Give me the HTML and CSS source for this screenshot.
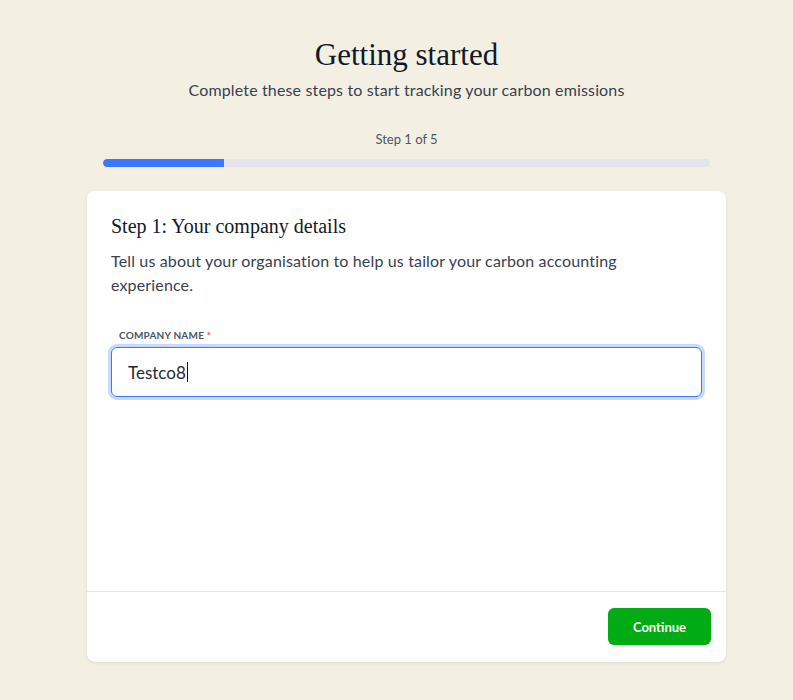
FILE: index.html
```html
<!DOCTYPE html>
<html>
<head>
<meta charset="utf-8">
<link rel="stylesheet" href="styles.css">
</head>
<body>
<div class="page">
  <div class="wrap">
    <header class="hero">
      <h1 class="hero-title">Getting started</h1>
      <p class="hero-sub">Complete these steps to start tracking your carbon emissions</p>
    </header>
    <div class="progress">
      <div class="progress-label">Step 1 of 5</div>
      <div class="progress-track"><div class="progress-fill" style="width:20%"></div></div>
    </div>
    <section class="card">
      <div class="card-body">
        <h2 class="card-title">Step 1: Your company details</h2>
        <p class="card-desc">Tell us about your organisation to help us tailor your carbon accounting experience.</p>
        <label class="field-label">COMPANY NAME <span class="req">*</span></label>
        <div class="input"><span class="input-text">Testco8</span><span class="caret"></span></div>
      </div>
      <div class="card-foot">
        <button class="btn">Continue</button>
      </div>
    </section>
  </div>
</div>
</body>
</html>
```
FILE: styles.css
```css
* { box-sizing: border-box; }
html, body { margin: 0; padding: 0; }
body {
  background: #f3f0e3;
  font-family: Lato, "Noto Sans", sans-serif;
  color: #1f2937;
  height: 700px;
  overflow: hidden;
}
.page { padding: 0 0 0 20px; }
.wrap { width: 639px; margin: 0 auto; padding-top: 37px; }
.hero { text-align: center; }
.hero-title {
  font-family: "Liberation Serif", serif;
  font-weight: 400;
  font-size: 31px;
  line-height: 36px;
  margin: 0;
  color: #111827;
}
.hero-sub {
  margin: 6px 0 0;
  font-size: 16px;
  line-height: 22px;
  letter-spacing: 0.15px;
  color: #374151;
}
.progress { padding: 0 16px; margin-top: 29px; }
.progress-label {
  text-align: center;
  font-size: 13px;
  line-height: 18px;
  color: #4b5563;
}
.progress-track {
  margin-top: 11px;
  height: 8px;
  border-radius: 4px;
  background: #e3e5ec;
  overflow: hidden;
}
.progress-fill { height: 100%; background: #3b78ff; border-radius: 4px 0 0 4px; }
.card {
  margin-top: 24px;
  background: #fff;
  border-radius: 8px;
  box-shadow: 0 1px 3px rgba(120, 110, 70, 0.18);
}
.card-body { padding: 22px 24px 0; height: 401px; border-bottom: 1px solid #e5e7eb; }
.card-title {
  font-family: "Liberation Serif", serif;
  font-weight: 400;
  font-size: 20px;
  line-height: 26px;
  margin: 0;
  color: #111827;
}
.card-desc {
  margin: 10px 0 0;
  font-size: 16px;
  line-height: 24px;
  letter-spacing: 0.15px;
  color: #374151;
  padding-right: 70px;
}
.field-label {
  display: block;
  margin: 31px 0 0 8px;
  font-size: 10px;
  line-height: 14px;
  font-weight: 700;
  letter-spacing: 0.2px;
  color: #4b5563;
}
.req { color: #ef4444; }
.input {
  margin-top: 5px;
  height: 50px;
  border: 1px solid #3b78ff;
  border-radius: 6px;
  box-shadow: 0 0 0 3px #c7d9ff;
  display: flex;
  align-items: center;
  padding: 0 16px;
  font-size: 17px;
  color: #1f2937;
}
.caret { width: 1px; height: 20px; background: #111; margin-left: 1px; }
.card-foot {
  display: flex;
  justify-content: flex-end;
  padding: 16px 15px 17px;
}
.btn {
  width: 103px;
  height: 37px;
  border: 0;
  border-radius: 6px;
  background: #00ab14;
  color: #fff;
  font-family: Lato, "Noto Sans", sans-serif;
  font-weight: 700;
  font-size: 13px;
}
```
